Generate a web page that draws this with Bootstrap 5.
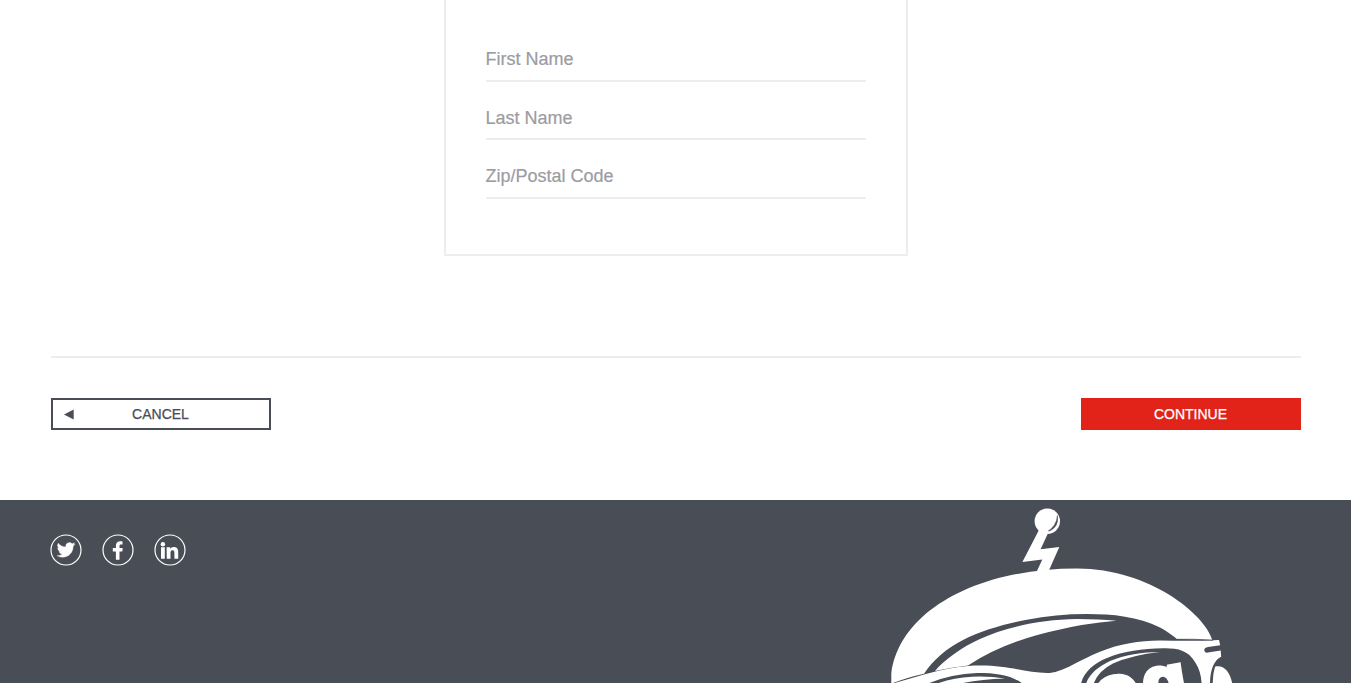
<!DOCTYPE html>
<html lang="en">
<head>
<meta charset="utf-8">
<meta name="viewport" content="width=device-width, initial-scale=1">
<title>Your details</title>
<link href="https://cdn.jsdelivr.net/npm/bootstrap@5.3.0/dist/css/bootstrap.min.css" rel="stylesheet">
<style>
  :root { --slate: #494d55; --rule: #ededee; --brand: #e2231a; }
  html { overflow: hidden; }
  body { font-family: "Liberation Sans", Arial, sans-serif; height: 683px; overflow: hidden; background: #fff; }
  .page-body { width: 1351px; height: 683px; overflow: hidden; }
  .page-inner { width: 1250px; margin-left: 51px; }
  .form-box { width: 464px; height: 256px; margin-left: 393px; padding: 23.4px 40px 0; border: 2px solid var(--rule); border-top: 0; }
  .field { height: 58.5px; padding-bottom: 6.6px; border-bottom: 2px solid var(--rule); color: #9b9ca2; font-size: 18px; line-height: 27px; text-indent: -.5px; cursor: text; -webkit-text-stroke: .2px; }
  .actions { margin-top: 100px; padding-top: 40px; border-top: 2px solid var(--rule); }
  .btn-step { width: 220px; height: 32px; padding: 0 1px 0 0; border: 2px solid; border-radius: 0; font-size: 14px; line-height: 28px; -webkit-text-stroke: .25px; }
  .btn-cancel { color: var(--slate); border-color: var(--slate); }
  .btn-continue { color: #fff; background: var(--brand); border-color: var(--brand); }
  .btn-arrow { left: 11px; top: 9px; }
  .site-footer { height: 183px; margin-top: 70px; padding: 0 116px 0 50px; background: var(--slate); }
  .social { gap: 20px; padding-top: 34px; }
</style>
</head>
<body>
<div class="page-body d-flex flex-column">
  <main class="page-inner">
    <form class="form-box">
      <label class="field d-flex align-items-end">First Name</label>
      <label class="field d-flex align-items-end">Last Name</label>
      <label class="field d-flex align-items-end">Zip/Postal Code</label>
    </form>
    <div class="actions d-flex justify-content-between">
      <button type="button" class="btn btn-step btn-cancel position-relative">
        <svg class="btn-arrow position-absolute" width="10" height="11" viewBox="0 0 10 11"><path d="M0 5.5 9.7.5v10z" fill="currentColor"/></svg>CANCEL</button>
      <button type="button" class="btn btn-step btn-continue">CONTINUE</button>
    </div>
  </main>
  <footer class="site-footer d-flex justify-content-between flex-shrink-0">
    <nav class="social d-flex" aria-label="Social media">
      <a href="#" class="d-block" aria-label="Twitter"><svg class="d-block" width="32" height="32" viewBox="0 0 32 32"><circle cx="16" cy="16" r="15" fill="none" stroke="#fff" stroke-width="1.2"/><path transform="translate(6.9 6.3) scale(1.13)" fill="#fff" stroke="#fff" stroke-width=".3" d="M5.026 15c6.038 0 9.341-5.003 9.341-9.334 0-.14 0-.282-.006-.422A6.685 6.685 0 0 0 16 3.542a6.658 6.658 0 0 1-1.889.518 3.301 3.301 0 0 0 1.447-1.817 6.533 6.533 0 0 1-2.087.793A3.286 3.286 0 0 0 7.875 6.03a9.325 9.325 0 0 1-6.767-3.429 3.289 3.289 0 0 0 1.018 4.382A3.323 3.323 0 0 1 .64 6.575v.045a3.288 3.288 0 0 0 2.632 3.218 3.203 3.203 0 0 1-.865.115 3.230 3.230 0 0 1-.614-.057 3.283 3.283 0 0 0 3.067 2.277A6.588 6.588 0 0 1 .78 13.58a6.320 6.320 0 0 1-.78-.045A9.344 9.344 0 0 0 5.026 15z"/></svg></a>
      <a href="#" class="d-block" aria-label="Facebook"><svg class="d-block" width="32" height="32" viewBox="0 0 32 32"><circle cx="16" cy="16" r="15" fill="none" stroke="#fff" stroke-width="1.2"/><path fill="#fff" d="M13.900 25.800v-8.300h-3.100v-3.500h3.100v-2.400c0-3 1.800-4.400 4.600-4.400.9 0 1.600.1 2 .2v3.100h-1.500c-1.300 0-1.500.6-1.500 1.500v2h3.200l-.4 3.500h-2.800v8.300z"/></svg></a>
      <a href="#" class="d-block" aria-label="LinkedIn"><svg class="d-block" width="32" height="32" viewBox="0 0 32 32"><circle cx="16" cy="16" r="15" fill="none" stroke="#fff" stroke-width="1.2"/><circle cx="8.900" cy="10.200" r="2.200" fill="#fff"/><path fill="#fff" d="M7 13.200h3.800V24.800H7zM12.600 13.200h3.600v1.600c.6-1 1.800-1.900 3.600-1.900 3.400 0 4.400 2.200 4.400 5.300v6.600h-3.800v-5.900c0-1.600-.4-2.700-1.800-2.700-1.700 0-2.100 1.200-2.100 2.700v5.900h-3.700z"/></svg></a>
    </nav>
    <svg class="d-block" width="345" height="183" viewBox="890 500 345 183" fill="#fff" aria-hidden="true">
      <!-- antenna -->
      <circle cx="1047.300" cy="521.300" r="12.700"/>
      <path d="M1057.400 515.500Q1059.500 528 1046.500 532.200Q1057 526 1057.400 515.500z" fill="#494d55" stroke="#494d55" stroke-width=".5"/>
      <path d="M1039.500 529 1022.400 562 1042.300 559.500 1036.500 572 1048.700 571 1059.300 547 1040.600 549.300 1049 531z"/>
      <!-- helmet shell -->
      <path d="M891.300 684V674C899 612 975 568.600 1077 568.600C1150 568.600 1205 615 1212.200 639.800L1177 639C1172 635 1166 630.500 1160 627.500C1138 616.500 1113 614 1087 614C1066 614 1046 616 1027 619.800C1004 624 981 631 963 640C947 648 933 660 924 673.700Q907 677.500 893 683z"/>
      <path d="M935 671C944 660 962 647 980 639C1004 628 1040 619.300 1077 619Q1099 619 1116.500 620.700Q1081 624 1060 629.500Q1005 641 968 665.500Q951 667.500 935 671z"/>
      <!-- goggle frame with both lens openings -->
      <path fill-rule="evenodd" d="M893 683.500 924 674.600Q950 667 968 666C1005 663.500 1025 673 1047 673C1062 673 1077 661 1100 651.700C1120 643.500 1139 640.700 1160 640.400Q1190 641.500 1219 640L1220.200 645.300 1208 646.900Q1204.300 647.500 1204.300 650Q1204.500 653 1208 652.600L1220.700 650.600 1221.200 656.700C1214 660 1210 670 1210 684H1201.700Q1201 671 1195 662C1188 650 1177 648 1163 648.300C1142 649 1124 651 1107 658C1094 663 1083 673 1081 684H1023C1012 675.500 999 673 977 673Q950 674 927 684z"/>
      <path d="M1086 684C1089 674 1098 667 1110 661C1124 655 1143 652 1160 652Q1132 655 1113 663.500Q1098 671 1093.500 684z"/>
      <path d="M936 684Q953 677.500 972 676.700 990 676 1005 678.600 980 679.300 958 684z"/>
      <path d="M1215 666.700C1223 664.500 1230 671 1232.300 684H1212.800Q1212.500 675 1215 666.700z"/>
      <!-- lens lettering -->
      <g font-family="Liberation Sans, Arial, sans-serif" font-weight="700" stroke="#fff">
        <text font-size="72" stroke-width="6.500" transform="translate(1099 719.500) rotate(-10)">o</text>
        <text font-size="72" stroke-width="5" transform="translate(1146.500 709.500) rotate(-10)">g</text>
      </g>
      <path d="M1177 639.300Q1195 638.700 1213 640.400" fill="none" stroke="#494d55" stroke-width=".7"/>
    </svg>
  </footer>
</div>
<script src="https://cdn.jsdelivr.net/npm/bootstrap@5.3.0/dist/js/bootstrap.bundle.min.js"></script>
</body>
</html>
